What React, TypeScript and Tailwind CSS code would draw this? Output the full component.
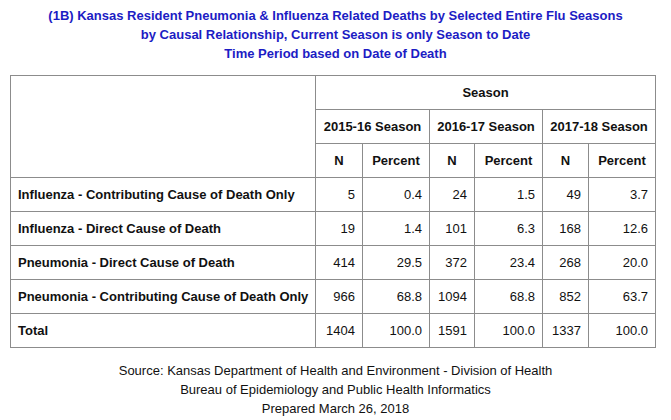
const FONT = "font-['Liberation_Sans',Arial,sans-serif]";

type Row = { label: string; values: [string, string, string, string, string, string] };

const rows: Row[] = [
  { label: "Influenza - Contributing Cause of Death Only", values: ["5", "0.4", "24", "1.5", "49", "3.7"] },
  { label: "Influenza - Direct Cause of Death", values: ["19", "1.4", "101", "6.3", "168", "12.6"] },
  { label: "Pneumonia - Direct Cause of Death", values: ["414", "29.5", "372", "23.4", "268", "20.0"] },
  { label: "Pneumonia - Contributing Cause of Death Only", values: ["966", "68.8", "1094", "68.8", "852", "63.7"] },
  { label: "Total", values: ["1404", "100.0", "1591", "100.0", "1337", "100.0"] },
];

const seasons = ["2015-16 Season", "2016-17 Season", "2017-18 Season"];

const cell = "border border-[#8c8c8c] h-[34px] px-[7px] whitespace-nowrap";

export default function App() {
  return (
    <div className={`w-[671px] h-[420px] bg-white text-[#111] ${FONT}`}>
      <div className="pt-[6px] text-center text-[13px] leading-[19px] font-bold text-[#1c1cc4]">
        <div>(1B) Kansas Resident Pneumonia &amp; Influenza Related Deaths by Selected Entire Flu Seasons</div>
        <div>by Causal Relationship, Current Season is only Season to Date</div>
        <div>Time Period based on Date of Death</div>
      </div>

      <table className="mt-[12px] ml-[10px] w-[645px] table-fixed border-collapse text-[13px] leading-[16px]">
        <colgroup>
          <col className="w-[305px]" />
          <col className="w-[47px]" />
          <col className="w-[67px]" />
          <col className="w-[45px]" />
          <col className="w-[68px]" />
          <col className="w-[46px]" />
          <col className="w-[67px]" />
        </colgroup>
        <thead className="font-bold">
          <tr>
            <th rowSpan={3} className={cell}></th>
            <th colSpan={6} className={`${cell} text-center`}>Season</th>
          </tr>
          <tr>
            {seasons.map((s) => (
              <th key={s} colSpan={2} className={`${cell} text-center`}>{s}</th>
            ))}
          </tr>
          <tr>
            {seasons.map((s) => [
              <th key={s + "n"} className={`${cell} text-center`}>N</th>,
              <th key={s + "p"} className={`${cell} text-center`}>Percent</th>,
            ])}
          </tr>
        </thead>
        <tbody>
          {rows.map((r) => (
            <tr key={r.label}>
              <td className={`${cell} font-bold text-left`}>{r.label}</td>
              {r.values.map((v, i) => (
                <td key={i} className={`${cell} text-right`}>{v}</td>
              ))}
            </tr>
          ))}
        </tbody>
      </table>

      <div className="mt-[13px] text-center text-[13px] leading-[19px]">
        <div>Source: Kansas Department of Health and Environment - Division of Health</div>
        <div>Bureau of Epidemiology and Public Health Informatics</div>
        <div>Prepared March 26, 2018</div>
      </div>
    </div>
  );
}
